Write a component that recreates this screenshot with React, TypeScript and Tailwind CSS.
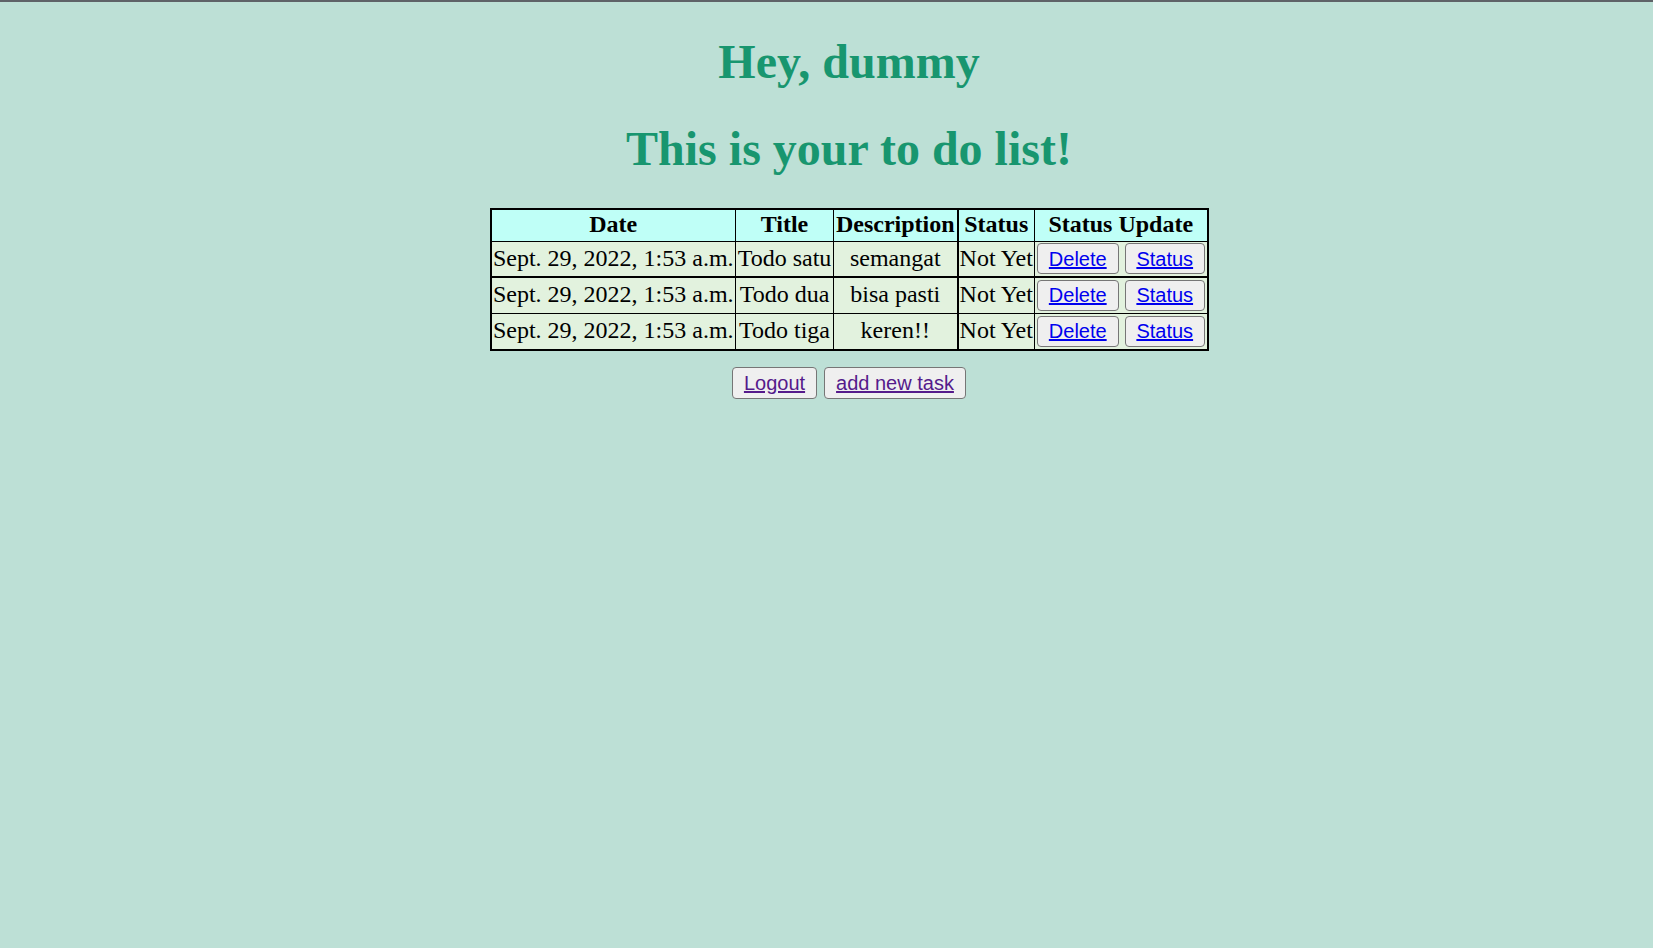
const todos = [
  { date: "Sept. 29, 2022, 1:53 a.m.", title: "Todo satu", desc: "semangat", status: "Not Yet" },
  { date: "Sept. 29, 2022, 1:53 a.m.", title: "Todo dua", desc: "bisa pasti", status: "Not Yet" },
  { date: "Sept. 29, 2022, 1:53 a.m.", title: "Todo tiga", desc: "keren!!", status: "Not Yet" },
];

function Btn({ label, w }: { label: string; w: string }) {
  return (
    <button
      className={`${w} h-[31px] border border-[#767676] rounded-[4px] bg-[#efefef] text-[20px] leading-none underline text-[#0000ee]`}
      style={{ fontFamily: '"Liberation Sans", Arial, sans-serif' }}
    >
      {label}
    </button>
  );
}

export default function App() {
  return (
    <div
      className="min-h-screen bg-[#bde0d6] text-black text-[24px] leading-[1.15]"
      style={{ fontFamily: '"Liberation Serif", "Times New Roman", serif' }}
    >
      <div className="h-[2px] bg-[#5f6368]" />
      <div className="pl-[45px] flex flex-col items-center">
        <h1 className="mt-[32px] text-[48px] font-bold leading-[55px] text-[#18966f]">Hey, dummy</h1>
        <h1 className="mt-[32px] text-[48px] font-bold leading-[55px] text-[#18966f]">This is your to do list!</h1>

        <table className="mt-[32px] border-collapse border-2 border-black">
          <thead>
            <tr className="bg-[#bffff7] h-[32px]">
              <th className="w-[245px] border border-black px-[1px] py-0 font-bold">Date</th>
              <th className="w-[98px] border border-black px-[1px] py-0 font-bold">Title</th>
              <th className="w-[124px] border border-black border-r-2 px-[1px] py-0 font-bold">Description</th>
              <th className="w-[77px] border border-black px-[1px] py-0 font-bold">Status</th>
              <th className="w-[173px] border border-black px-[1px] py-0 font-bold">Status Update</th>
            </tr>
          </thead>
          <tbody>
            {todos.map((t, i) => (
              <tr key={i} className={`bg-[#e2f2de] ${i === 2 ? "h-[37px]" : "h-[36px]"}`}>
                <td className={`border border-black px-[1px] py-0 text-center whitespace-nowrap ${i === 0 ? "border-b-2" : ""}`}>{t.date}</td>
                <td className={`border border-black px-[1px] py-0 text-center whitespace-nowrap ${i === 0 ? "border-b-2" : ""}`}>{t.title}</td>
                <td className={`border border-black border-r-2 px-[1px] py-0 text-center whitespace-nowrap ${i === 0 ? "border-b-2" : ""}`}>{t.desc}</td>
                <td className={`border border-black px-[1px] py-0 text-center whitespace-nowrap ${i === 0 ? "border-b-2" : ""}`}>{t.status}</td>
                <td className={`border border-black px-[1px] py-0 ${i === 0 ? "border-b-2" : ""}`}>
                  <div className="flex items-center justify-center gap-[6px]">
                    <Btn label="Delete" w="w-[82px]" />
                    <Btn label="Status" w="w-[80px]" />
                  </div>
                </td>
              </tr>
            ))}
          </tbody>
        </table>

        <div className="mt-[16px] flex gap-[7px]">
          <button
            className="h-[32px] w-[85px] border border-[#767676] rounded-[4px] bg-[#efefef] text-[20px] leading-none underline text-[#551a8b]"
            style={{ fontFamily: '"Liberation Sans", Arial, sans-serif' }}
          >
            Logout
          </button>
          <button
            className="h-[32px] w-[142px] border border-[#767676] rounded-[4px] bg-[#efefef] text-[20px] leading-none underline text-[#551a8b]"
            style={{ fontFamily: '"Liberation Sans", Arial, sans-serif' }}
          >
            add new task
          </button>
        </div>
      </div>
    </div>
  );
}
